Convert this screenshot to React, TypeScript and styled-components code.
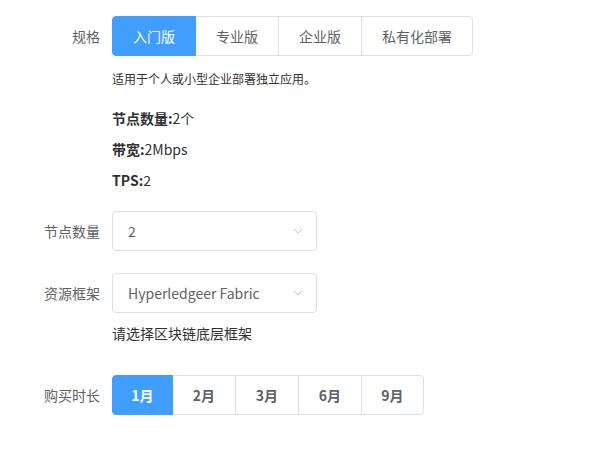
import React, { useState } from "react";
import styled, { createGlobalStyle } from "styled-components";

const Global = createGlobalStyle`
  html, body { margin: 0; padding: 0; background: #fff; }
  body {
    font-family: "Noto Sans CJK SC", "Noto Sans", sans-serif;
    color: #303133;
    -webkit-font-smoothing: antialiased;
  }
  * { box-sizing: border-box; }
`;

const Form = styled.div`
  display: flex;
  flex-direction: column;
  padding-top: 16px;
  width: 603px;
  height: 454px;
`;

const FormItem = styled.div<{ $mt?: number }>`
  display: flex;
  align-items: flex-start;
  margin-top: ${(p) => p.$mt ?? 0}px;
`;

const Label = styled.div`
  width: 112px;
  flex: none;
  padding-right: 12px;
  text-align: right;
  font-size: 14px;
  line-height: 40px;
  color: #606266;
`;

const Content = styled.div`
  display: flex;
  flex-direction: column;
`;

const Group = styled.div`
  display: flex;
`;

const RadioButton = styled.button<{ $active: boolean; $bold?: boolean; $w: number }>`
  height: 40px;
  width: ${(p) => p.$w}px;
  padding: 0;
  margin: 0;
  margin-left: -1px;
  font-family: inherit;
  font-size: 14px;
  font-weight: ${(p) => (p.$bold ? 600 : 400)};
  color: ${(p) => (p.$active ? "#fff" : "#606266")};
  background: ${(p) => (p.$active ? "#409eff" : "#fff")};
  border: 1px solid ${(p) => (p.$active ? "#409eff" : "#dcdfe6")};
  position: relative;
  z-index: ${(p) => (p.$active ? 1 : 0)};
  cursor: pointer;
  &:first-child {
    margin-left: 0;
    border-radius: 4px 0 0 4px;
  }
  &:last-child {
    border-radius: 0 4px 4px 0;
  }
`;

const Desc = styled.p`
  margin: 12px 0 0;
  font-size: 12px;
  line-height: 22px;
  color: #303133;
`;

const InfoList = styled.div`
  display: flex;
  flex-direction: column;
  margin-top: 13px;
`;

const InfoLine = styled.div`
  font-size: 14px;
  line-height: 31px;
  color: #303133;
  b { font-weight: 700; }
`;

const Select = styled.div`
  width: 205px;
  height: 40px;
  border: 1px solid #dcdfe6;
  border-radius: 4px;
  display: flex;
  align-items: center;
  justify-content: space-between;
  padding: 0 11px 0 15px;
  font-size: 14px;
  color: #606266;
  background: #fff;
`;

const Hint = styled.p`
  margin: 9px 0 0;
  font-size: 14px;
  line-height: 22px;
  color: #303133;
`;

const Arrow = () => (
  <svg width="14" height="14" viewBox="0 0 14 14">
    <path d="M3 5.2 L7 9 L11 5.2" fill="none" stroke="#c0c4cc" strokeWidth="1" />
  </svg>
);

const specs = [
  { label: "入门版", w: 84 },
  { label: "专业版", w: 84 },
  { label: "企业版", w: 84 },
  { label: "私有化部署", w: 112 },
];

const months = [
  { label: "1月", w: 61 },
  { label: "2月", w: 64 },
  { label: "3月", w: 64 },
  { label: "6月", w: 64 },
  { label: "9月", w: 63 },
];

export default function App() {
  const [spec, setSpec] = useState(0);
  const [month, setMonth] = useState(0);
  return (
    <>
      <Global />
      <Form>
        <FormItem>
          <Label>规格</Label>
          <Content>
            <Group>
              {specs.map((s, i) => (
                <RadioButton key={s.label} $w={s.w} $active={spec === i} onClick={() => setSpec(i)}>
                  {s.label}
                </RadioButton>
              ))}
            </Group>
            <Desc>适用于个人或小型企业部署独立应用。</Desc>
            <InfoList>
              <InfoLine><b>节点数量:</b>2个</InfoLine>
              <InfoLine><b>带宽:</b>2Mbps</InfoLine>
              <InfoLine><b>TPS:</b>2</InfoLine>
            </InfoList>
          </Content>
        </FormItem>
        <FormItem $mt={15}>
          <Label>节点数量</Label>
          <Content>
            <Select>
              <span>2</span>
              <Arrow />
            </Select>
          </Content>
        </FormItem>
        <FormItem $mt={22}>
          <Label>资源框架</Label>
          <Content>
            <Select>
              <span>Hyperledgeer Fabric</span>
              <Arrow />
            </Select>
            <Hint>请选择区块链底层框架</Hint>
          </Content>
        </FormItem>
        <FormItem $mt={31}>
          <Label>购买时长</Label>
          <Content>
            <Group>
              {months.map((m, i) => (
                <RadioButton key={m.label} $w={m.w} $bold $active={month === i} onClick={() => setMonth(i)}>
                  {m.label}
                </RadioButton>
              ))}
            </Group>
          </Content>
        </FormItem>
      </Form>
    </>
  );
}
